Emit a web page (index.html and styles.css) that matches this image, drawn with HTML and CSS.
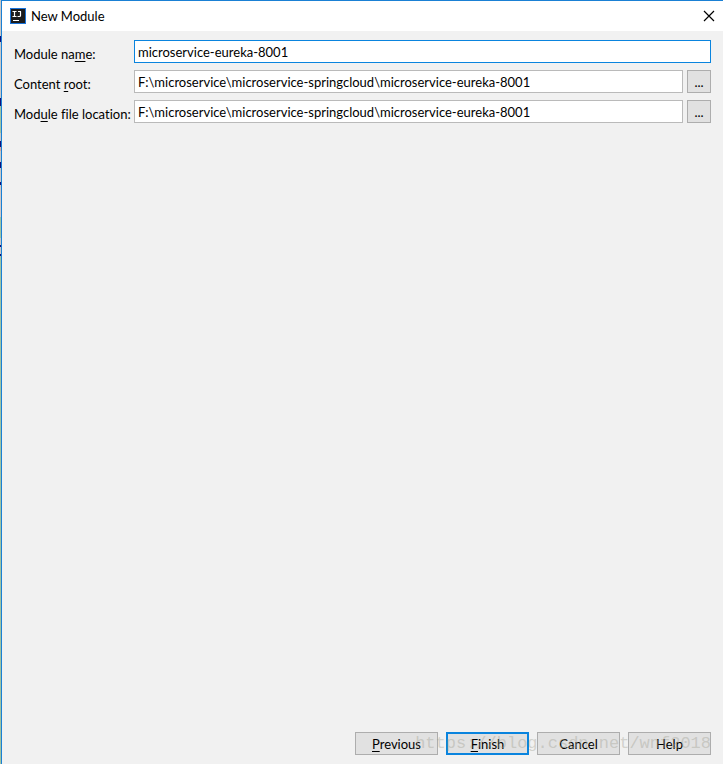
FILE: index.html
```html
<!DOCTYPE html>
<html lang="en">
<head>
<meta charset="utf-8">
<title>New Module</title>
<link rel="stylesheet" href="styles.css">
</head>
<body>
<div class="backdrop">
<main class="dialog">
  <header class="titlebar">
    <svg class="logo" viewBox="0 0 16 16" aria-hidden="true">
      <rect width="16" height="16" fill="#1a73d9"/>
      <rect x="1" y="1" width="14" height="14" fill="#1c1c1e"/>
      <path d="M2.500 3.500h4M4.500 3.500v5M2.500 8.500h4M8 3.500h3M10.500 3.500v4q0 1-1 1H7.500" fill="none" stroke="#fff" stroke-width="1.200"/>
      <path d="M3 12.500h6" stroke="#fff"/>
    </svg>
    <h1 class="title">New Module</h1>
    <button class="close" type="button" aria-label="Close">
      <svg viewBox="0 0 10 10" aria-hidden="true"><path d="M0 0l10 10M10 0L0 10" stroke="#000" stroke-width="1.200"/></svg>
    </button>
  </header>
  <form class="form">
    <div class="fields">
      <label for="name">Module na<u>m</u>e:</label>
      <input class="focused wide" id="name" type="text" value="microservice-eureka-8001">
      <label for="root">Content <u>r</u>oot:</label>
      <input id="root" type="text" value="F:\microservice\microservice-springcloud\microservice-eureka-8001">
      <button class="browse" type="button" aria-label="Browse content root">...</button>
      <label for="location">Mod<u>u</u>le file location:</label>
      <input id="location" type="text" value="F:\microservice\microservice-springcloud\microservice-eureka-8001">
      <button class="browse" type="button" aria-label="Browse module file location">...</button>
    </div>
    <footer class="actions">
      <button class="action" type="button"><u>P</u>revious</button>
      <button class="action primary" type="button"><u>F</u>inish</button>
      <button class="action" type="button">Cancel</button>
      <button class="action" type="button">Help</button>
      <span class="watermark">https://blog.csdn.net/wnf2018</span>
    </footer>
  </form>
</main>
</div>
</body>
</html>
```
FILE: styles.css
```css
* { box-sizing: border-box; }
body {
  margin: 0;
  font: 13px/18px Lato, "Noto Sans", sans-serif;
  font-variant-ligatures: none;
  color: #000;
}
.backdrop {
  min-height: 100vh;
  padding-left: 1px;
  display: flex;
  background: linear-gradient(
    #c8c8c8 36px, #10107a 36px 42px, #c8c8c8 42px 98px,
    #10107a 98px 106px, #9fc4a4 106px 133px, #c8c8c8 133px 141px,
    #10107a 141px 147px, #d8a8a0 147px 151px, #c8c8c8 151px 162px,
    #10107a 162px 168px, #c8c8c8 168px 182px, #10107a 182px 185px,
    #d0c8c8 185px 217px, #9fc4a4 217px 238px, #c8c8c8 238px 245px,
    #10107a 245px 247px, #c8c8c8 247px 254px, #10107a 254px 256px,
    #9fc4a4 256px);
}
.dialog {
  flex: 1;
  display: flex;
  flex-direction: column;
  background: #f1f1f1;
  border-top: 1px solid #1a80d4;
  border-left: 1px solid #1a80d4;
}
.titlebar {
  display: flex;
  align-items: center;
  height: 30px;
  padding: 0 9px 0 8px;
  background: #fff;
}
.logo { width: 16px; height: 16px; margin-right: 5px; }
.title { flex: 1; margin: 0; font-size: 13px; font-weight: 400; }
.close { border: 0; padding: 0; background: none; line-height: 0; }
.close svg { width: 10px; height: 10px; overflow: visible; }
.form {
  flex: 1;
  display: flex;
  flex-direction: column;
  justify-content: space-between;
  padding: 9px 12px;
}
.fields {
  display: grid;
  grid-template-columns: 116px 1fr 24px;
  gap: 7px 4px;
}
.fields label { white-space: nowrap; padding-top: 5px; }
u { text-underline-offset: 2px; text-decoration-thickness: 1px; text-decoration-skip-ink: none; }
.fields input {
  min-width: 0;
  height: 23px;
  padding: 0 3px;
  border: 1px solid #bababa;
  border-radius: 0;
  background: #fff;
  font: inherit;
  font-variant-ligatures: none;
  color: inherit;
  outline: 0;
}
.fields .wide { grid-column: span 2; }
.fields .focused { border-color: #0a84de; }
button { font: inherit; color: inherit; border-radius: 0; }
.browse, .action {
  height: 23px;
  padding: 0;
  border: 1px solid #adadad;
  background: #e1e1e1;
}
.actions {
  position: relative;
  display: flex;
  justify-content: flex-end;
  gap: 8px;
}
.action { width: 83px; }
.primary { border: 2px solid #0a84de; }
.watermark {
  position: absolute;
  right: 0;
  top: 0;
  font: 17px/23px "Liberation Mono", monospace;
  color: rgba(160, 160, 145, 0.4);
  pointer-events: none;
}
```
